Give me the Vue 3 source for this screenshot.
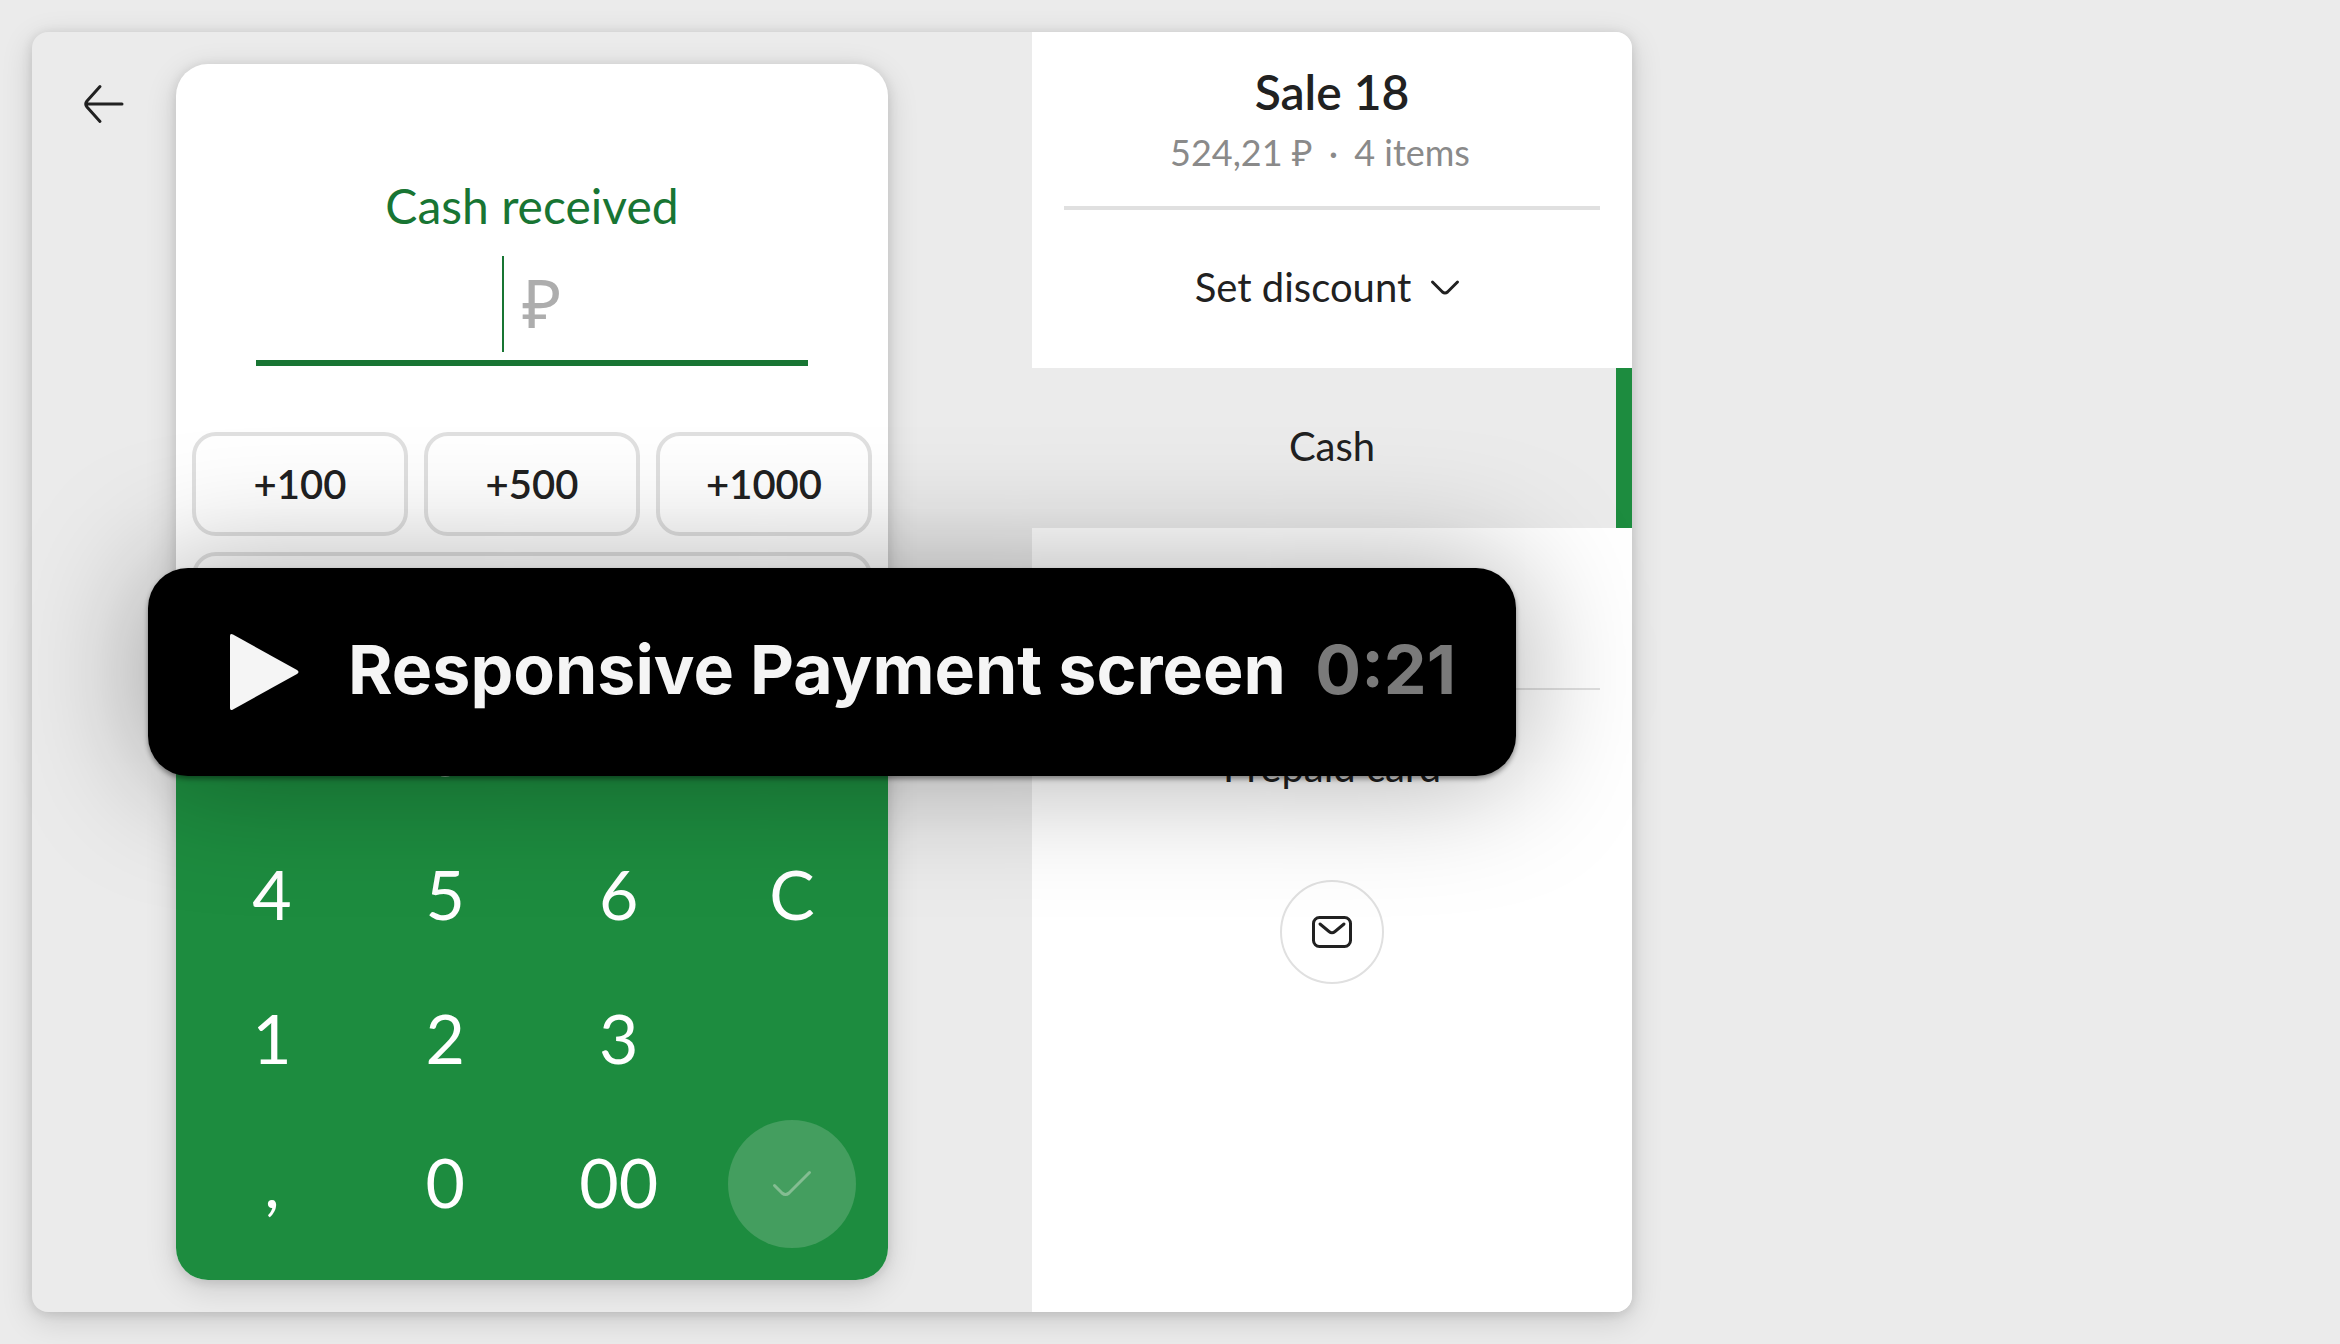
<script setup>
import { ref } from 'vue'

const amount = ref('')
const quickAmounts = ['+100', '+500', '+1000']
const keys = [
  '7', '8', '9', '',
  '4', '5', '6', 'C',
  '1', '2', '3', '',
  ',', '0', '00',
]
</script>

<template>
  <main class="page">
    <div class="panel">
      <section class="entry">
        <button class="back" type="button" aria-label="Back">
          <svg width="48" height="48" viewBox="0 0 48 48" fill="none" stroke="#212121" stroke-width="3" stroke-linecap="round" stroke-linejoin="round">
            <path d="M42 24H6M20 6.500L7 21Q4.500 24 7 27L20 41.500" />
          </svg>
        </button>

        <div class="card">
          <div class="display">
            <label class="label" for="cash">Cash received</label>
            <div class="field">
              <span class="caret"></span>
              <input id="cash" v-model="amount" class="amount" type="text" placeholder="₽" />
            </div>
            <div class="quick">
              <button v-for="q in quickAmounts" :key="q" class="quick-btn" type="button">{{ q }}</button>
              <button class="quick-btn wide" type="button">524,21</button>
            </div>
          </div>
          <div class="keypad">
            <template v-for="(k, i) in keys" :key="i">
              <button v-if="k" class="key" type="button">{{ k }}</button>
              <span v-else></span>
            </template>
            <button class="key confirm" type="button" aria-label="Confirm">
              <svg width="48" height="48" viewBox="0 0 48 48" fill="none" stroke="#84bd92" stroke-width="3" stroke-linecap="round" stroke-linejoin="round">
                <path d="M6.500 25.500L14 33Q17.500 36 21 33L41.500 12.500" />
              </svg>
            </button>
          </div>
        </div>
      </section>

      <aside class="sale">
        <header class="sale-head">
          <h1 class="title">Sale 18</h1>
          <p class="summary"><span>524,21 ₽</span><span>·</span><span>4 items</span></p>
        </header>
        <button class="row discount" type="button">
          Set discount
          <svg width="32" height="32" viewBox="0 0 32 32" fill="none" stroke="#212121" stroke-width="3" stroke-linecap="round" stroke-linejoin="round">
            <path d="M3.500 11L13.500 21Q16 23 18.500 21L28.500 11" />
          </svg>
        </button>
        <button class="row active" type="button">Cash</button>
        <button class="row" type="button">Card</button>
        <hr class="rule" />
        <button class="row prepaid" type="button">Prepaid card</button>
        <button class="mail" type="button" aria-label="Send receipt by email">
          <svg width="48" height="48" viewBox="0 0 48 48" fill="none" stroke="#212121" stroke-width="3" stroke-linecap="round" stroke-linejoin="round">
            <rect x="5.500" y="9.500" width="37" height="29" rx="6" />
            <path d="M12 16L21 23.500Q24 26 27 23.500L36 16" />
          </svg>
        </button>
      </aside>

      <button class="video" type="button">
        <svg width="72" height="80" viewBox="0 0 72 80" fill="#f5f5f5">
          <path d="M2 4Q2 1 5 2.500L69 38Q72 40 69 42L5 77.500Q2 79 2 76Z" />
        </svg>
        <span class="video-title">Responsive Payment screen</span>
        <span class="video-time">0:21</span>
      </button>
    </div>
  </main>
</template>

<style>
body {
  margin: 0;
  background: #ebebeb;
}
</style>

<style scoped>
* {
  box-sizing: border-box;
}

button {
  margin: 0;
  padding: 0;
  border: 0;
  background: none;
  color: inherit;
  font: inherit;
  cursor: pointer;
}

svg {
  display: block;
  flex: none;
}

.page {
  padding: 32px;
  color: #212121;
  font-family: Lato, "Noto Sans", sans-serif;
  font-size: 40px;
}

.panel {
  position: relative;
  display: grid;
  grid-template-columns: 5fr 3fr;
  max-width: 1600px;
  border-radius: 16px;
  background: #ebebeb;
  box-shadow: 0 8px 32px rgba(0, 0, 0, 0.14), 0 2px 12px rgba(0, 0, 0, 0.12);
}

.entry {
  display: grid;
  grid-template-columns: 144px 1fr 144px;
  align-items: start;
  padding: 32px 0;
}

.back {
  justify-self: center;
  margin-top: 16px;
}

.card {
  overflow: hidden;
  border-radius: 32px;
  background: #fff;
  box-shadow: 0 8px 32px rgba(0, 0, 0, 0.14), 0 2px 12px rgba(0, 0, 0, 0.12);
}

.display {
  padding: 112px 16px 16px;
}

.label {
  display: block;
  color: #187533;
  font-size: 48px;
  line-height: 60px;
  text-align: center;
}

.field {
  display: flex;
  justify-content: center;
  gap: 18px;
  margin: 20px 64px 0;
  padding-bottom: 8px;
  border-bottom: 6px solid #187533;
}

.caret {
  width: 2px;
  height: 96px;
  background: #187533;
}

.amount {
  width: 40px;
  padding: 0 0 6px;
  border: 0;
  outline: 0;
  background: none;
  color: #212121;
  font: inherit;
  font-size: 68px;
}

.amount::placeholder {
  color: #adadad;
  opacity: 1;
}

.quick {
  display: grid;
  grid-template-columns: repeat(3, 1fr);
  gap: 16px;
  margin-top: 66px;
}

.quick-btn {
  height: 104px;
  border: 4px solid #e0e0e0;
  border-radius: 24px;
  font-weight: 600;
}

.wide {
  grid-column: 1 / -1;
}

.keypad {
  display: grid;
  grid-template-columns: repeat(4, 128px);
  grid-auto-rows: 128px;
  justify-content: space-between;
  row-gap: 16px;
  padding: 16px 32px 32px;
  background: #1d8c3f;
  color: #fff;
  font-size: 68px;
}

.key {
  display: flex;
  align-items: center;
  justify-content: center;
  padding-bottom: 6px;
}

.confirm {
  padding: 0;
  border-radius: 50%;
  background: #449e5f;
}

.sale {
  border-radius: 0 16px 16px 0;
  background: #fff;
  text-align: center;
}

.sale-head {
  margin: 0 32px;
  padding: 30px 0 32px;
  border-bottom: 4px solid #e0e0e0;
}

.title {
  margin: 0;
  font-size: 48px;
  font-weight: 600;
  line-height: 60px;
}

.summary {
  display: flex;
  justify-content: center;
  gap: 16px;
  margin: 8px 24px 0 0;
  color: #8a8a8a;
  font-size: 36px;
  line-height: 44px;
}

.row {
  display: flex;
  align-items: center;
  justify-content: center;
  width: 100%;
  height: 160px;
  padding-bottom: 4px;
}

.discount {
  gap: 18px;
  height: 158px;
  padding-right: 8px;
}

.active {
  background: linear-gradient(#1d8c3f, #1d8c3f) right / 16px 100% no-repeat #ebebeb;
}

.rule {
  height: 2px;
  margin: 0 32px;
  border: 0;
  background: #e0e0e0;
}

.prepaid {
  height: 158px;
}

.mail {
  display: inline-flex;
  align-items: center;
  justify-content: center;
  width: 104px;
  height: 104px;
  margin-top: 32px;
  border: 2px solid #e0e0e0;
  border-radius: 50%;
}

.video {
  position: absolute;
  top: 50%;
  left: 50%;
  display: flex;
  align-items: center;
  width: 1368px;
  height: 208px;
  padding: 0 60px 0 80px;
  transform: translate(-50%, -50%);
  border-radius: 40px;
  background: #000;
  box-shadow: 0 0 128px rgba(0, 0, 0, 0.34), 0 3px 5px rgba(0, 0, 0, 0.4);
  color: #f5f5f5;
  font-family: Inter, sans-serif;
  font-size: 68px;
  font-weight: 700;
  white-space: nowrap;
}

.video-title,
.video-time {
  padding-bottom: 6px;
}

.video-title {
  margin-left: 48px;
}

.video-time {
  margin-left: auto;
  color: #7a7a7a;
}
</style>
